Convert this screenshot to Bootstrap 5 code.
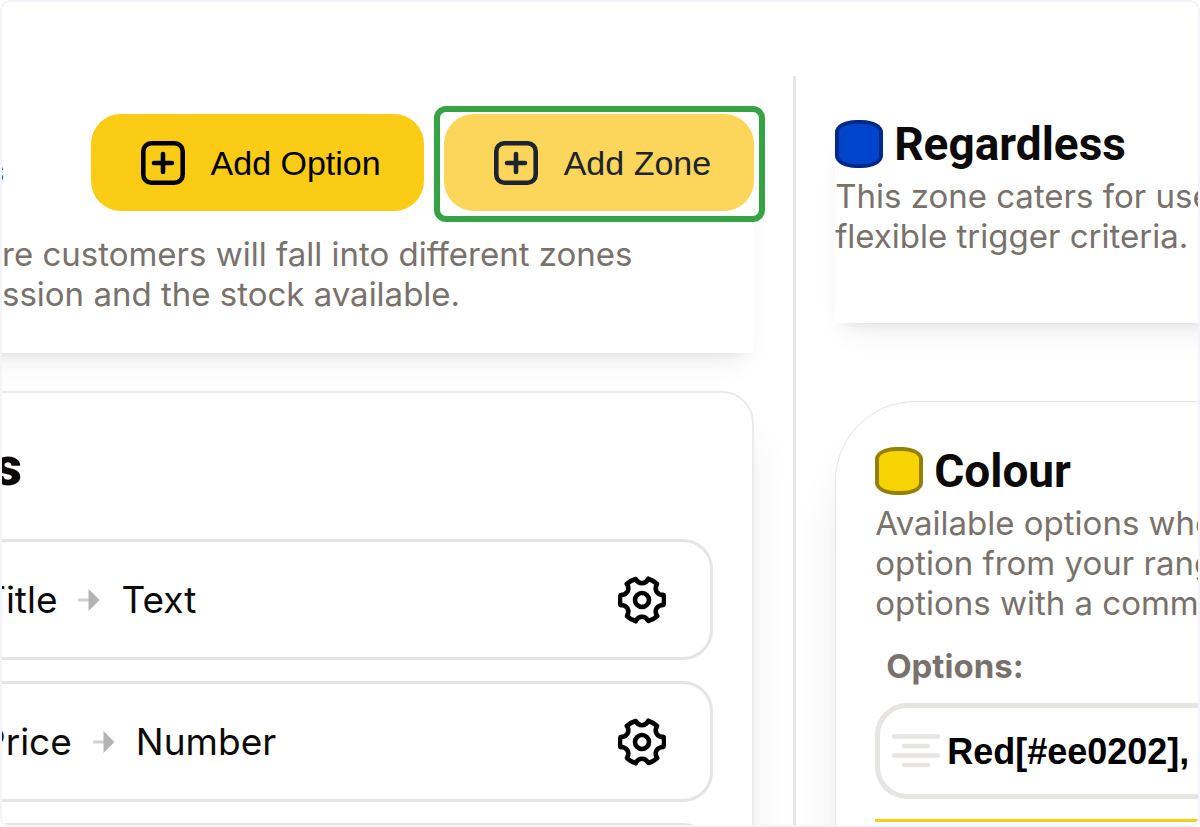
<!DOCTYPE html>
<html lang="en">
<head>
<meta charset="utf-8">
<meta name="viewport" content="width=device-width, initial-scale=1">
<title>Zones</title>
<link href="https://cdn.jsdelivr.net/npm/bootstrap@5.3.0/dist/css/bootstrap.min.css" rel="stylesheet">
<style>
  :root { --line: #e7e5e4; --ink: #0c0a09; --stone: #78716c; }
  body { font-family: Inter, "Liberation Sans", sans-serif; font-size: 33px; line-height: 40px; color: var(--ink); background: #fff; }
  .frame { height: 100vh; border: 2px solid #f3f3f9; border-radius: 10px; }
  .board { margin-top: 74px; }
  .fields-col { flex: 0 0 66.4%; border-right: 3px solid var(--line); padding: 38px 39px 0 0; }
  .zones-col { min-width: 0; padding: 43px 0 0 39px; }
  .copy { color: var(--stone); }
  .soft-shadow { box-shadow: 0 20px 30px -12px rgba(0,0,0,.07), 0 8px 12px -8px rgba(0,0,0,.1); }
  .deep-shadow { box-shadow: 0 40px 50px -10px rgba(0,0,0,.1), 0 16px 20px -12px rgba(0,0,0,.1); }

  .intro { margin-left: -40px; padding: 0 0 39px 40px; }
  .intro-title { width: 2px; font: 700 35px/40px Roboto, sans-serif; padding-top: 38px; }
  .intro .copy { margin-top: 23px; }
  .actions { gap: 20px; }
  .btn-add { --bs-btn-bg: #facc15; --bs-btn-color: #000; --bs-btn-hover-bg: #fcd65b; --bs-btn-hover-color: #1c2430;
    height: 97px; padding: 0 43px 0 50px; gap: 26px; border: 0; border-radius: 30px;
    font-family: "Liberation Sans", Arial, sans-serif; font-size: 34px; line-height: 40px; }
  .btn-add.is-hovered { --bs-btn-bg: #fcd65b; --bs-btn-color: #1c2430; }
  .highlight { inset: -8px -11px -11px -10px; border: 6px solid #35a344; border-radius: 12px; pointer-events: none; }

  .fields-card { margin: 38px 0 0 -90px; padding: 44px 39px 80px 40px; border: 2px solid #ecebea; border-radius: 32px; background: #fff; }
  .fields-title { font: 900 54px/60px Roboto, sans-serif; margin: 0 0 42px; width: 68px; }
  .field-list { gap: 21px; }
  .field-row { height: 121px; padding: 0 44px 0 25px; gap: 21px; border: 3px solid var(--line); border-radius: 30px; font-size: 37px; }
  .btn-gear { color: #000; }

  .zone-title { font: 700 46px/50px Roboto, sans-serif; gap: 11px; margin: 0 0 7px; }
  .swatch { width: 48px; height: 48px; border: 4px solid; border-radius: 44% / 25%; }
  .swatch-blue { background: #0044cc; border-color: #00298a; }
  .swatch-yellow { background: #f8d304; border-color: #958006; }
  .zone-intro { margin-right: -40px; padding-bottom: 67px; }
  .zone-card { margin-top: 78px; padding: 44px 0 80px 39px; border: 1px solid var(--line); border-right: 0; border-radius: 80px 0 0 80px; background: #fff; }
  .options-label { margin: 23px 0 17px; padding-left: 11px; font-weight: 700; color: var(--stone); }
  .options-box { height: 96px; border: 5px solid var(--line); border-right: 0; border-radius: 32px 0 0 32px; padding-left: 12px; gap: 7px; }
  .options-box input { min-width: 0; border: 0; outline: 0; padding: 2px 0 0; color: #000; font: 700 36px/40px "Liberation Sans", Arial, sans-serif; }
  .accent { height: 3px; margin-top: 20px; background: #facc15; }
</style>
</head>
<body>
<svg class="d-none">
  <symbol id="plus-box" viewBox="0 0 44 44">
    <g fill="none" stroke="currentColor" stroke-width="4.600" stroke-linecap="round"><rect x="2.300" y="2.300" width="39.400" height="39.400" rx="8"/><path d="M13 22h18M22 13v18"/></g>
  </symbol>
  <symbol id="gear" viewBox="-24 -24 48 48">
    <g fill="none" stroke="currentColor" stroke-width="4.600" stroke-linejoin="round" stroke-linecap="round">
      <circle r="7"/>
      <path id="tooth" d="M15 16.1Q11.500 19.600 6.400 21C4.600 18 2.600 16.800 0 16.800C-2.600 16.800-4.600 18-6.400 21"/>
      <use href="#tooth" transform="rotate(60)"/><use href="#tooth" transform="rotate(120)"/><use href="#tooth" transform="rotate(180)"/><use href="#tooth" transform="rotate(240)"/><use href="#tooth" transform="rotate(300)"/>
    </g>
  </symbol>
  <symbol id="arrow" viewBox="0 0 22 22"><path d="M0 9.500h11v3H1q-1 0-1-1.500z" fill="#cfcfcf"/><path d="M10.500 0L21.500 11L10.500 22z" fill="#b3b3b3"/></symbol>
  <symbol id="lines" viewBox="0 0 48 34"><path d="M2 2.500h44M12 12h24M2 21.500h44M12 31h24" fill="none" stroke="#e7e5e4" stroke-width="4.300" stroke-linecap="round"/></symbol>
</svg>

<main class="frame overflow-hidden">
  <div class="board d-flex align-items-stretch">
    <section class="fields-col">
      <header class="intro soft-shadow">
        <div class="d-flex justify-content-between">
          <h1 class="intro-title d-flex justify-content-end overflow-hidden m-0">s</h1>
          <div class="actions d-flex">
            <button type="button" class="btn btn-add d-flex align-items-center"><svg width="44" height="44"><use href="#plus-box"/></svg>Add Option</button>
            <div class="position-relative">
              <button type="button" class="btn btn-add is-hovered d-flex align-items-center"><svg width="44" height="44"><use href="#plus-box"/></svg>Add Zone</button>
              <span class="highlight position-absolute"></span>
            </div>
          </div>
        </div>
        <p class="copy mb-0 text-nowrap">re customers will fall into different zones<br>ssion and the stock available.</p>
      </header>

      <div class="fields-card deep-shadow">
        <h2 class="fields-title text-end">s</h2>
        <div class="field-list d-flex flex-column">
          <div class="field-row d-flex align-items-center">
            <span>Title</span><svg width="22" height="22"><use href="#arrow"/></svg><span>Text</span>
            <button type="button" class="btn btn-gear border-0 p-0 ms-auto d-flex" aria-label="Settings"><svg width="48" height="48"><use href="#gear"/></svg></button>
          </div>
          <div class="field-row d-flex align-items-center">
            <span>Price</span><svg width="22" height="22"><use href="#arrow"/></svg><span>Number</span>
            <button type="button" class="btn btn-gear border-0 p-0 ms-auto d-flex" aria-label="Settings"><svg width="48" height="48"><use href="#gear"/></svg></button>
          </div>
          <div class="field-row"></div>
        </div>
      </div>
    </section>

    <section class="zones-col flex-grow-1">
      <div class="zone-intro soft-shadow">
        <h2 class="zone-title d-flex align-items-center"><span class="swatch swatch-blue"></span>Regardless</h2>
        <p class="copy mb-0 text-nowrap">This zone caters for users<br>flexible trigger criteria.</p>
      </div>
      <div class="zone-card deep-shadow">
        <h2 class="zone-title d-flex align-items-center"><span class="swatch swatch-yellow"></span>Colour</h2>
        <p class="copy mb-0 text-nowrap">Available options when<br>option from your range<br>options with a comma</p>
        <label class="options-label d-block" for="options">Options:</label>
        <div class="options-box d-flex align-items-center">
          <svg class="flex-shrink-0" width="48" height="34"><use href="#lines"/></svg>
          <input id="options" class="flex-grow-1 bg-transparent" type="text" value="Red[#ee0202],">
        </div>
        <div class="accent"></div>
      </div>
    </section>
  </div>
</main>
<script src="https://cdn.jsdelivr.net/npm/bootstrap@5.3.0/dist/js/bootstrap.bundle.min.js"></script>
</body>
</html>
